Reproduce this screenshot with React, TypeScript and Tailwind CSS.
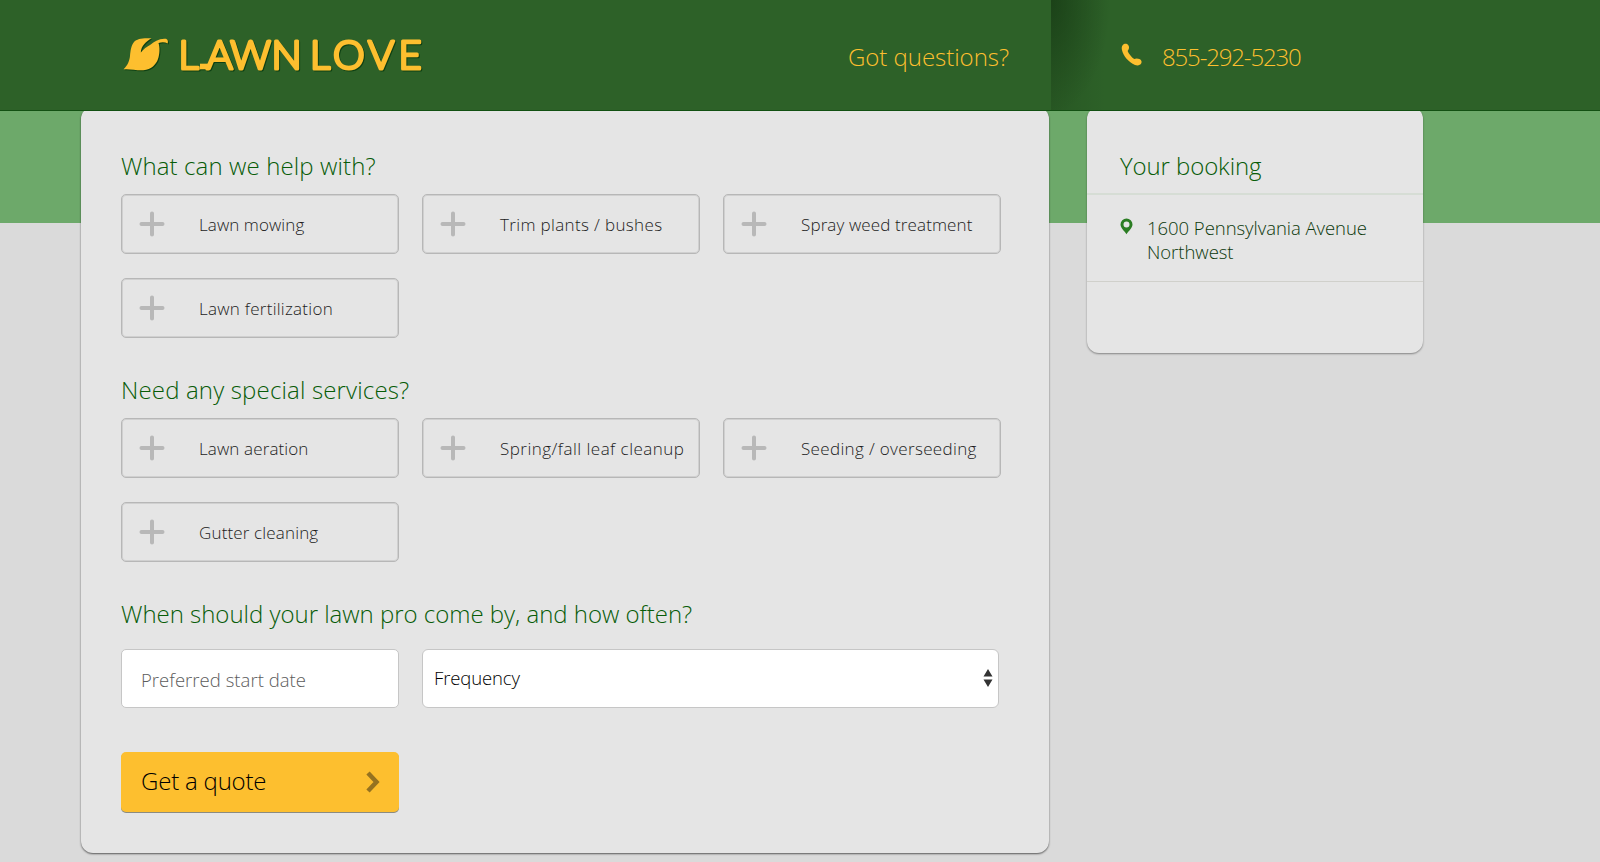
import { ReactNode } from 'react'

interface Service {
  label: string
  tracking: string
}

const services: Service[] = [
  { label: 'Lawn mowing', tracking: 'tracking-[0.08px]' },
  { label: 'Trim plants / bushes', tracking: 'tracking-[0.35px]' },
  { label: 'Spray weed treatment', tracking: 'tracking-[0.12px]' },
  { label: 'Lawn fertilization', tracking: 'tracking-[0.27px]' },
]

const specialServices: Service[] = [
  { label: 'Lawn aeration', tracking: 'tracking-[0.12px]' },
  { label: 'Spring/fall leaf cleanup', tracking: 'tracking-[0.48px]' },
  { label: 'Seeding / overseeding', tracking: 'tracking-[0.34px]' },
  { label: 'Gutter cleaning', tracking: 'tracking-[0.15px]' },
]

function Logo() {
  return (
    <svg
      width="304"
      height="40"
      viewBox="122 34 304 40"
      className="-mt-0.5 overflow-visible drop-shadow-[1px_1px_0.5px_rgba(0,50,10,0.7)]"
      fill="#fdbf2f"
    >
      <path d="M123.5 69.3C128 65 129.5 60.500 130 56C130.500 51 131 45.500 134 42C137 38.500 143 37.800 151.500 38.300C146 41.500 141 46 140.800 52.600C144 48.500 146.500 47 150 45C154 41.500 160 38 166 38.800Q168.600 40 167.700 43.400C165 42 162 42 158.500 42.900C160 47 159.800 54 158 59C156 65 151 69 145 70C138 71 130 68.500 123.500 69.300Z" />
      <text
        x="178.500 206.500 230.300 271.500 310 333 368 398.500"
        y="69"
        fontFamily="Lato, 'Liberation Sans', sans-serif"
        fontSize="40"
        stroke="#fdbf2f"
        strokeWidth="3.200"
        strokeLinejoin="round"
      >
        LAWNLOVE
      </text>
      {/* joins the foot of the L to the A */}
      <path d="M200 63.700H209V69.300H200Z" />
    </svg>
  )
}

function PhoneIcon() {
  return (
    <svg width="22" height="24" viewBox="0 0 22 24" fill="#fdbf2f">
      <path d="M1.800 2C3 .6 5.800.3 7.200 2C8.600 3.800 8.200 6.200 6.600 8C7.800 10.800 10.400 14.200 13.200 16C14.800 15.200 16.600 15.200 18.400 16C20.500 17 21 18.700 20.300 20.300C19.300 22.300 16.500 22.900 14 21.900C7.500 19.100 2.400 13.300 .9 6.800C.5 4.800 .8 3.200 1.800 2Z" />
    </svg>
  )
}

function SectionTitle({ children, className }: { children: ReactNode; className?: string }) {
  return <h2 className={`h-8 text-2xl leading-[34px] whitespace-nowrap text-[#085c08] ${className ?? ''}`}>{children}</h2>
}

function ServiceButton({ label, tracking }: Service) {
  return (
    <button className="flex h-[60px] items-center rounded-[5px] border border-[#b7b7b7] pl-[17px] shadow-[inset_0_0_0_1px_#d0d0d0]">
      <svg width="26" height="26" viewBox="0 0 26 26" stroke="#b8b8b8" strokeWidth="4" strokeLinecap="round">
        <path d="M13 2.500V23.500M2.500 13H23.500" />
      </svg>
      <span className={`pt-px pl-[34px] text-[17px] whitespace-nowrap text-[#1c1c1c] ${tracking}`}>{label}</span>
    </button>
  )
}

function ServiceGrid({ items }: { items: Service[] }) {
  return (
    <div className="mt-[13px] grid grid-cols-[278px_278px_278px] gap-x-[23px] gap-y-6">
      {items.map((item) => (
        <ServiceButton key={item.label} {...item} />
      ))}
    </div>
  )
}

export default function App() {
  return (
    <div className="h-[862px] w-[1600px] overflow-hidden bg-[linear-gradient(#6da96a_223px,#dadada_223px)] font-['Open_Sans','Noto_Sans',sans-serif] font-light">
      <header className="relative z-10 flex h-[111px] border-b border-[#125012] bg-[#2d6128] text-2xl text-[#fdbf2f]">
        <div className="flex w-[1051px] items-center justify-between pr-[42px] pl-[122px]">
          <Logo />
          <span className="pt-[3px] tracking-[-0.03px]">Got questions?</span>
        </div>
        <div className="flex flex-1 items-center bg-[radial-gradient(ellipse_60px_115px_at_0_0,rgba(0,20,0,0.32),transparent),linear-gradient(90deg,rgba(0,20,0,0.12),transparent_55px)] pl-[70px]">
          <PhoneIcon />
          <span className="pt-[3px] pl-[19px] tracking-[-1.15px]">855-292-5230</span>
        </div>
      </header>

      <div className="-mt-1 flex items-start pl-[81px]">
        <main className="h-[746px] w-[968px] rounded-xl bg-[#e5e5e5] px-10 pt-[42px] shadow-[0_1px_2px_rgba(0,0,0,0.6)]">
          <SectionTitle className="tracking-[0.11px]">What can we help with?</SectionTitle>
          <ServiceGrid items={services} />

          <SectionTitle className="mt-[35px] tracking-[0.16px]">Need any special services?</SectionTitle>
          <ServiceGrid items={specialServices} />

          <SectionTitle className="mt-[35px] tracking-[-0.02px]">
            When should your lawn pro come by, and how often?
          </SectionTitle>
          <div className="mt-5 flex gap-[23px] text-[18.5px]">
            <div className="flex h-[59px] w-[278px] items-center rounded-[5px] border border-[#c6c6c6] bg-white pt-[3px] pl-[19px] tracking-[0.04px] text-[#5c5c5c]">
              Preferred start date
            </div>
            <div className="flex h-[59px] w-[577px] items-center justify-between rounded-[6px] border border-[#c6c6c6] bg-white pr-[5px] pb-0.5 pl-[11px] text-black">
              <span className="tracking-[-0.12px]">Frequency</span>
              <svg width="10" height="18" viewBox="0 0 10 18" fill="#333">
                <path d="M5 0L9.500 7.500H.5ZM5 18L9.500 10.500H.5Z" />
              </svg>
            </div>
          </div>

          <button className="mt-11 flex h-[60px] w-[278px] items-center justify-between rounded-[5px] bg-[#fdbf2f] pr-[19px] pl-5 text-2xl text-black shadow-[0_1px_0_#8b8b80]">
            <span className="pb-0.5 tracking-[-0.2px]">Get a quote</span>
            <svg width="14" height="22" viewBox="0 0 14 22" fill="none" stroke="#957220" strokeWidth="4.500">
              <path d="M2 2L10.500 11L2 20" />
            </svg>
          </button>
        </main>

        <aside className="ml-[38px] h-[246px] w-[336px] rounded-xl bg-[#e5e5e5] pt-[42px] shadow-[0_1px_2px_rgba(0,0,0,0.4)]">
          <SectionTitle className="pl-[33px] tracking-[-0.1px]">Your booking</SectionTitle>
          <div className="mt-3 flex h-[89px] border-t-2 border-b border-t-[#d6ddd5] border-b-[#d0d0cb] pt-[21px] pl-[33px]">
            <svg width="13" height="17" viewBox="0 0 13 17" className="mt-[2px]" fill="#2b7d23" fillRule="evenodd">
              <path d="M6.500.5A6 6 0 0 1 12.500 6.500C12.500 10 8.500 13 6.500 16.200C4.500 13 .5 10 .5 6.500A6 6 0 0 1 6.500.5ZM6.500 3.500A3 3 0 1 0 6.500 9.500A3 3 0 1 0 6.500 3.500Z" />
            </svg>
            <p className="pl-[14px] text-[18.5px] leading-6 tracking-[-0.04px] text-[#0c380c]">
              1600 Pennsylvania Avenue
              <br />
              Northwest
            </p>
          </div>
        </aside>
      </div>
    </div>
  )
}
